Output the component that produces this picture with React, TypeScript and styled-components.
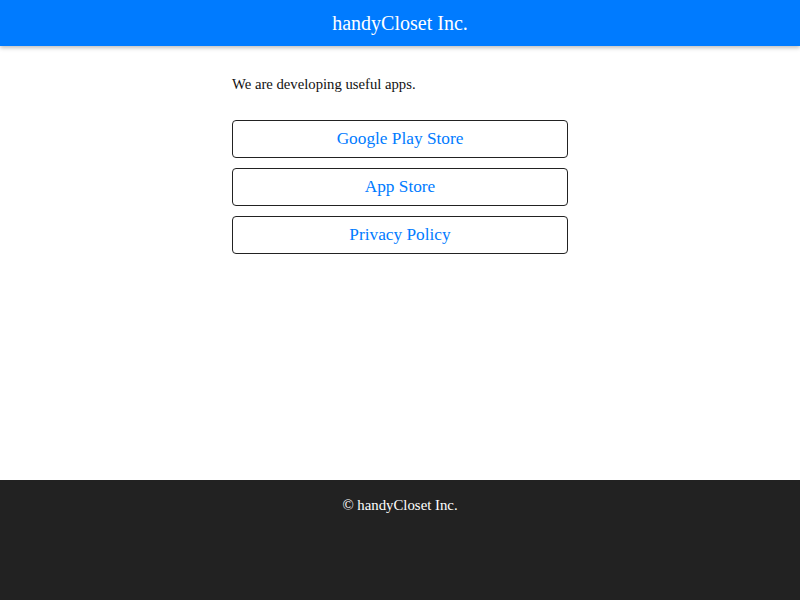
import React from 'react';
import styled, { createGlobalStyle } from 'styled-components';

const GlobalStyle = createGlobalStyle`
  html, body {
    margin: 0;
    padding: 0;
  }
  body {
    font-family: "Liberation Serif", "Times New Roman", serif;
    background: #fff;
  }
`;

const links = ['Google Play Store', 'App Store', 'Privacy Policy'];

const App: React.FC = () => {
  return (
    <Page>
      <GlobalStyle />
      <Header>
        <h1 className="title">handyCloset Inc.</h1>
      </Header>
      <Main>
        <p className="lead">We are developing useful apps.</p>
        <LinkList>
          {links.map((label) => (
            <LinkButton key={label} href="#">
              {label}
            </LinkButton>
          ))}
        </LinkList>
      </Main>
      <Footer>
        <p className="copy">© handyCloset Inc.</p>
      </Footer>
    </Page>
  );
};

const Page = styled.div`
  display: flex;
  flex-direction: column;
  min-height: 100vh;
`;

const Header = styled.header`
  height: 46px;
  background: #007bff;
  box-shadow: 0 2px 4px rgba(0, 0, 0, 0.25);
  display: flex;
  justify-content: center;
  align-items: center;
  position: relative;
  z-index: 1;
  .title {
    margin: 0;
    font-size: 20px;
    font-weight: normal;
    color: #fff;
  }
`;

const Main = styled.main`
  flex: 1;
  width: 336px;
  margin: 0 auto;
  padding-top: 30px;
  .lead {
    margin: 0 0 27px;
    font-size: 14.7px;
    color: #111;
  }
`;

const LinkList = styled.div`
  display: flex;
  flex-direction: column;
  gap: 10px;
`;

const LinkButton = styled.a`
  display: flex;
  justify-content: center;
  align-items: center;
  height: 38px;
  box-sizing: border-box;
  border: 1px solid #222;
  border-radius: 4px;
  color: #007bff;
  font-size: 17.3px;
  text-decoration: none;
`;

const Footer = styled.footer`
  height: 120px;
  background: #222;
  display: flex;
  justify-content: center;
  .copy {
    margin: 17px 0 0;
    font-size: 14.8px;
    color: #fff;
  }
`;

export default App;
